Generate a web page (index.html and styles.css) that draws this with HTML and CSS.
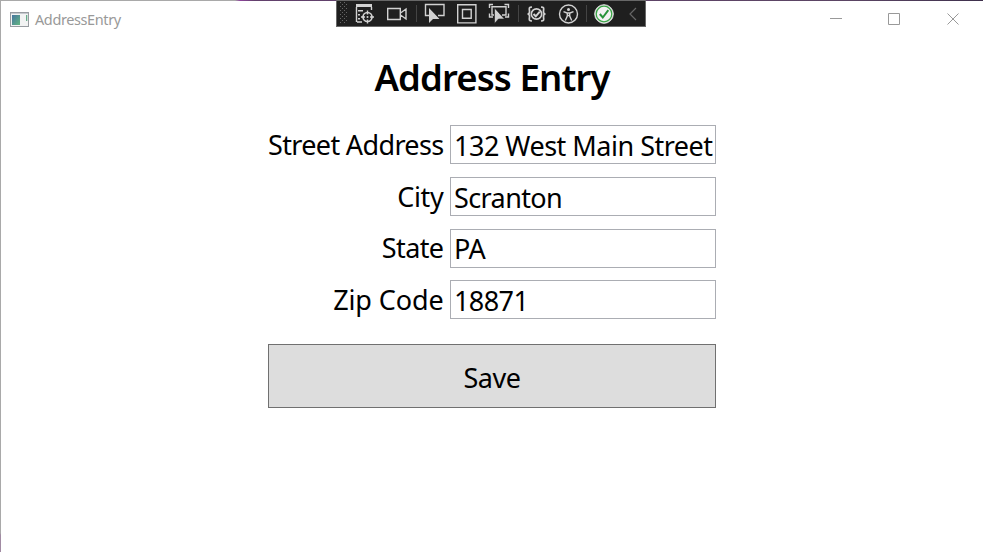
FILE: index.html
```
<!DOCTYPE html>
<html lang="en">
<head>
<meta charset="utf-8">
<title>AddressEntry</title>
<link rel="stylesheet" href="styles.css">
</head>
<body>
<div class="window">
  <header class="titlebar">
    <svg class="app-icon" width="19" height="16" viewBox="0 0 19 16">
      <defs><linearGradient id="screen" x1="0" y1="0" x2="1" y2="1"><stop offset="0" stop-color="#4775a0"/><stop offset="1" stop-color="#62b681"/></linearGradient></defs>
      <rect x=".5" y=".5" width="18" height="14" fill="#f2f3f3" stroke="#989ca1"/>
      <path d="M1 1.500h17" stroke="#c5c9ce"/>
      <rect x="2" y="3" width="8" height="10" fill="url(#screen)"/>
      <rect x="16" y="3" width="1.300" height="6" fill="#68ad8b"/>
    </svg>
    <span class="app-title">AddressEntry</span>
    <svg class="controls" width="125" height="14" viewBox="0 0 125 14" fill="none" stroke="#999">
      <path d="M0 6.500h12M58.500 1.500h11v11h-11z"/>
      <path d="M117.500 1.500l11 11M128.500 1.500l-11 11"/>
    </svg>
  </header>
  <main class="form">
    <h1>Address Entry</h1>
    <div class="row"><label class="street-label">Street Address</label><div class="field street-value">132 West Main Street</div></div>
    <div class="row"><label class="city-label">City</label><div class="field">Scranton</div></div>
    <div class="row state"><label>State</label><div class="field">PA</div></div>
    <div class="row zip"><label class="zip-label">Zip Code</label><div class="field">18871</div></div>
    <button>Save</button>
  </main>
</div>
<div class="debugbar">
  <svg width="310" height="27" viewBox="336 0 310 27" fill="none" stroke="#d2d2d2" stroke-width="1.4">
    <defs><pattern id="grip" x="340" y="2" width="4" height="4" patternUnits="userSpaceOnUse"><path d="M0 0h1v1H0zM2 2h1v1H2z" fill="#666" stroke="none"/></pattern></defs>
    <rect x="340" y="2" width="7" height="22" fill="url(#grip)" stroke="none"/>
    <path d="M356 5.500h16" stroke-width="3"/>
    <path d="M356.500 7v15M358 10.700h5M358 14.700h2M358 18.700h2M357 22h5M371.500 7v3"/>
    <circle cx="367.500" cy="17" r="4.500" stroke-width="1.700"/>
    <path d="M367.500 10.500v4M367.500 19.500v4M361 17h4M370 17h4"/>
    <circle cx="367.500" cy="17" r="1" fill="#d2d2d2" stroke="none"/>
    <path d="M387.700 8.500h12.600v11h-12.600zM400.500 13l5.500-4v10l-5.500-4"/>
    <path d="M416.500 5v17M518.500 5v17M586.500 5v17" stroke="#444" stroke-width="1"/>
    <path d="M429 15.500h-3.500v-11h18.500v11h-6"/>
    <path d="M429 8v15l4-4h6.500z" fill="#d2d2d2" stroke="none"/>
    <path d="M457.700 4.700h18.200v18.200h-18.200zM462.500 9.500h8.700v8.700h-8.700z"/>
    <path d="M489.500 8V4.500h3.500M504.500 4.500h4V8M489.500 13.500V17h3.500M508.500 13.500V17H505M494 15h-2V6.700h14V15h-4"/>
    <path d="M494.500 8v15.500l4-4.500h6z" fill="#d2d2d2" stroke="#1f1f1f" stroke-width=".6"/>
    <path d="M532 7c-3 0-3 1-2.500 4 .2 2-.5 3-2 3 1.500 0 2.200 1 2 3-.5 3-.5 4 2.500 4M541 7c3 0 3 1 2.500 4-.2 2 .5 3 2 3-1.500 0-2.200 1-2 3 .5 3 .5 4-2.500 4" stroke-width="1.700"/>
    <circle cx="536.500" cy="14" r="5.200" stroke-width="1.700"/>
    <path d="M533.500 14l2.300 2.300 4-4.600" stroke-width="2"/>
    <circle cx="568.500" cy="14" r="9"/>
    <circle cx="568.500" cy="9.400" r="1.500" fill="#d2d2d2" stroke="none"/>
    <path d="M563.500 11.700l3.500 1.300h3l3.500-1.300M567.300 13v3l-2 4.500M569.700 13v3l2 4.500M567 15.500h3"/>
    <circle cx="604" cy="14" r="9.300" fill="#f2f2f2" stroke="#ddd" stroke-width="1"/>
    <circle cx="604" cy="14" r="7.800" stroke="#3ba447" stroke-width="1.300"/>
    <path d="M599.800 14l3 3.500 5.500-7.300" stroke="#27933a" stroke-width="2"/>
    <path d="M636 8l-6 6 6 6" stroke="#666" stroke-width="1.200"/>
  </svg>
</div>
</body>
</html>
```
FILE: styles.css
```
* { box-sizing: border-box; }
body { margin: 0; background: #fff; color: #000; font-family: "Noto Sans", "Open Sans", sans-serif; }
.window {
  height: 552px;
  padding: 1px 0 0 1px;
  background:
    linear-gradient(90deg, #a9a9a9 0 235px, #8d459b 240px, #62406c 255px, #5b4564 850px, #3e304c) 0 0 / 100% 1px no-repeat,
    linear-gradient(#a9a9a9 0 533px, #a18ba3 535px) 0 0 / 1px 100% no-repeat,
    #fff;
  overflow: hidden;
}
.titlebar { display: flex; align-items: center; height: 36px; padding: 0 23px 0 9px; }
.app-icon { flex: none; margin-top: 1px; }
.app-title { margin-left: 6px; font-size: 14.5px; line-height: 20px; color: #999; letter-spacing: -.4px; white-space: nowrap; }
.controls { flex: none; margin-left: auto; margin-right: 5px; overflow: visible; }
.form { width: 448px; margin-left: 267px; }
h1 { margin: 13px 0 21px; height: 54px; text-align: center; font-size: 36.5px; line-height: 54px; font-weight: 600; letter-spacing: -.87px; white-space: nowrap; }
.row { display: flex; height: 39px; margin-bottom: 13px; font-size: 27px; line-height: 40px; letter-spacing: -.6px; white-space: nowrap; }
.row label { width: 182px; padding-right: 6.5px; text-align: right; }
.row.state { line-height: 38px; }
.row.zip { margin: -1px 0 25px; }
.row .street-label { letter-spacing: -.65px; }
.row .city-label { letter-spacing: -.3px; }
.row .zip-label { letter-spacing: -.12px; }
.field { width: 266px; border: 1px solid #abadb3; padding-left: 3px; }
.street-value { letter-spacing: -.5px; }
button { display: block; width: 448px; height: 64px; padding: 3px 0 0; border: 1px solid #707070; background: #ddd; color: #000; font-family: inherit; font-size: 27px; letter-spacing: -.5px; }
.debugbar { position: absolute; left: 336px; top: 0; width: 310px; height: 27px; background: #1f1f1f; box-shadow: inset 0 0 0 1px #686868; }
.debugbar svg { display: block; }
```
